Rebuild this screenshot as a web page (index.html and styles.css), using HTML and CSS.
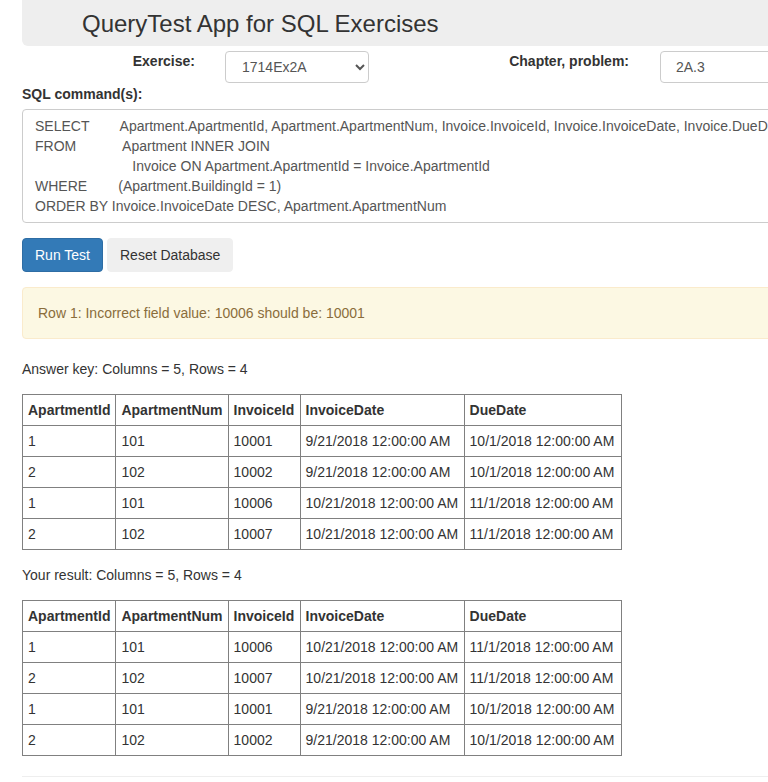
FILE: index.html
```html
<!DOCTYPE html>
<html lang="en">
<head>
<meta charset="utf-8">
<title>QueryTest App for SQL Exercises</title>
<link rel="stylesheet" href="styles.css">
</head>
<body>
<div class="page">
  <header class="jumbotron">
    <h1 class="title">QueryTest App for SQL Exercises</h1>
  </header>

  <form class="exercise-form">
    <div class="form-row">
      <label class="row-label exercise-label" for="exercise">Exercise:</label>
      <select id="exercise" class="control select-control">
        <option>1714Ex2A</option>
      </select>
      <label class="row-label chapter-label" for="chapter">Chapter, problem:</label>
      <input id="chapter" class="control text-control" type="text" value="2A.3">
    </div>

    <label class="block-label">SQL command(s):</label>
    <div class="sql-box"><div class="sql-line">SELECT        Apartment.ApartmentId, Apartment.ApartmentNum, Invoice.InvoiceId, Invoice.InvoiceDate, Invoice.DueDate</div><div class="sql-line">FROM            Apartment INNER JOIN</div><div class="sql-line">                         Invoice ON Apartment.ApartmentId = Invoice.ApartmentId</div><div class="sql-line">WHERE        (Apartment.BuildingId = 1)</div><div class="sql-line">ORDER BY Invoice.InvoiceDate DESC, Apartment.ApartmentNum</div></div>

    <div class="buttons">
      <button type="button" class="btn btn-primary">Run Test</button>
      <button type="button" class="btn btn-default">Reset Database</button>
    </div>
  </form>

  <div class="alert">Row 1: Incorrect field value: 10006 should be: 10001</div>

  <p class="summary">Answer key: Columns = 5, Rows = 4</p>
  <table class="result">
    <thead>
      <tr><th>ApartmentId</th><th>ApartmentNum</th><th class="col-invoice">InvoiceId</th><th class="col-date">InvoiceDate</th><th class="col-due">DueDate</th></tr>
    </thead>
    <tbody>
      <tr><td>1</td><td>101</td><td>10001</td><td>9/21/2018 12:00:00 AM</td><td>10/1/2018 12:00:00 AM</td></tr>
      <tr><td>2</td><td>102</td><td>10002</td><td>9/21/2018 12:00:00 AM</td><td>10/1/2018 12:00:00 AM</td></tr>
      <tr><td>1</td><td>101</td><td>10006</td><td>10/21/2018 12:00:00 AM</td><td>11/1/2018 12:00:00 AM</td></tr>
      <tr><td>2</td><td>102</td><td>10007</td><td>10/21/2018 12:00:00 AM</td><td>11/1/2018 12:00:00 AM</td></tr>
    </tbody>
  </table>

  <p class="summary">Your result: Columns = 5, Rows = 4</p>
  <table class="result">
    <thead>
      <tr><th>ApartmentId</th><th>ApartmentNum</th><th class="col-invoice">InvoiceId</th><th class="col-date">InvoiceDate</th><th class="col-due">DueDate</th></tr>
    </thead>
    <tbody>
      <tr><td>1</td><td>101</td><td>10006</td><td>10/21/2018 12:00:00 AM</td><td>11/1/2018 12:00:00 AM</td></tr>
      <tr><td>2</td><td>102</td><td>10007</td><td>10/21/2018 12:00:00 AM</td><td>11/1/2018 12:00:00 AM</td></tr>
      <tr><td>1</td><td>101</td><td>10001</td><td>9/21/2018 12:00:00 AM</td><td>10/1/2018 12:00:00 AM</td></tr>
      <tr><td>2</td><td>102</td><td>10002</td><td>9/21/2018 12:00:00 AM</td><td>10/1/2018 12:00:00 AM</td></tr>
    </tbody>
  </table>

  <hr class="divider">
</div>
</body>
</html>
```

FILE: styles.css
```css
html {
  overflow: hidden;
}
body {
  margin: 0;
  font-family: "Liberation Sans", Arial, Helvetica, sans-serif;
  font-size: 14px;
  line-height: 20px;
  color: #333;
  background: #fff;
}
.page {
  width: 940px;
  padding: 0 22px;
}
.jumbotron {
  background: #eee;
  border-radius: 0 0 6px 6px;
  padding: 11px 60px 9px;
}
.title {
  margin: 0;
  font-size: 24px;
  font-weight: 400;
  line-height: 26px;
  color: #333;
}
.exercise-form {
  margin: 0;
}
.form-row {
  display: flex;
  align-items: flex-start;
  margin-top: 5px;
  margin-bottom: 1px;
}
.row-label {
  font-weight: 700;
  text-align: right;
  padding-right: 30px;
  box-sizing: border-box;
}
.exercise-label {
  width: 203px;
}
.chapter-label {
  width: 291px;
  padding-right: 31px;
}
.control {
  height: 32px;
  box-sizing: border-box;
  border: 1px solid #ccc;
  border-radius: 4px;
  background: #fff;
  font-family: inherit;
  font-size: 14px;
  color: #555;
  padding: 6px 12px;
}
.select-control {
  width: 144px;
  padding: 5px 10px 5px 12px;
}
.text-control {
  width: 280px;
  padding-left: 15px;
}
.block-label {
  display: block;
  font-weight: 700;
  margin-bottom: 5px;
}
.sql-box {
  border: 1px solid #ccc;
  border-radius: 4px;
  padding: 6px 12px;
  white-space: pre;
  overflow: hidden;
  color: #555;
}
.sql-line {
  height: 20px;
}
.buttons {
  display: flex;
  gap: 4px;
  margin-top: 15px;
}
.btn {
  font-family: inherit;
  font-size: 14px;
  line-height: 20px;
  padding: 6px 12px;
  border-radius: 4px;
  border: 1px solid transparent;
  cursor: pointer;
}
.btn-primary {
  background: #337ab7;
  border-color: #2e6da4;
  color: #fff;
}
.btn-default {
  background: #efefef;
  border-color: #efefef;
  color: #333;
}
.alert {
  margin-top: 15px;
  padding: 15px;
  background: #fcf8e3;
  border: 1px solid #faebcc;
  border-radius: 4px;
  color: #8a6d3b;
}
.summary {
  margin: 20px 0 15px;
}
.result {
  border-collapse: collapse;
  border: 1px solid #808080;
}
.result th,
.result td {
  border: 1px solid #808080;
  padding: 5px 5px;
  text-align: left;
  white-space: nowrap;
}
.result th {
  font-weight: 700;
}
.result .col-invoice {
  width: 61px;
}
.result .col-date {
  width: 153px;
}
.result .col-due {
  width: 146px;
}
.result + .summary {
  margin-top: 15px;
}
.divider {
  margin: 20px 0 0;
  border: 0;
  border-top: 1px solid #eee;
}
```
